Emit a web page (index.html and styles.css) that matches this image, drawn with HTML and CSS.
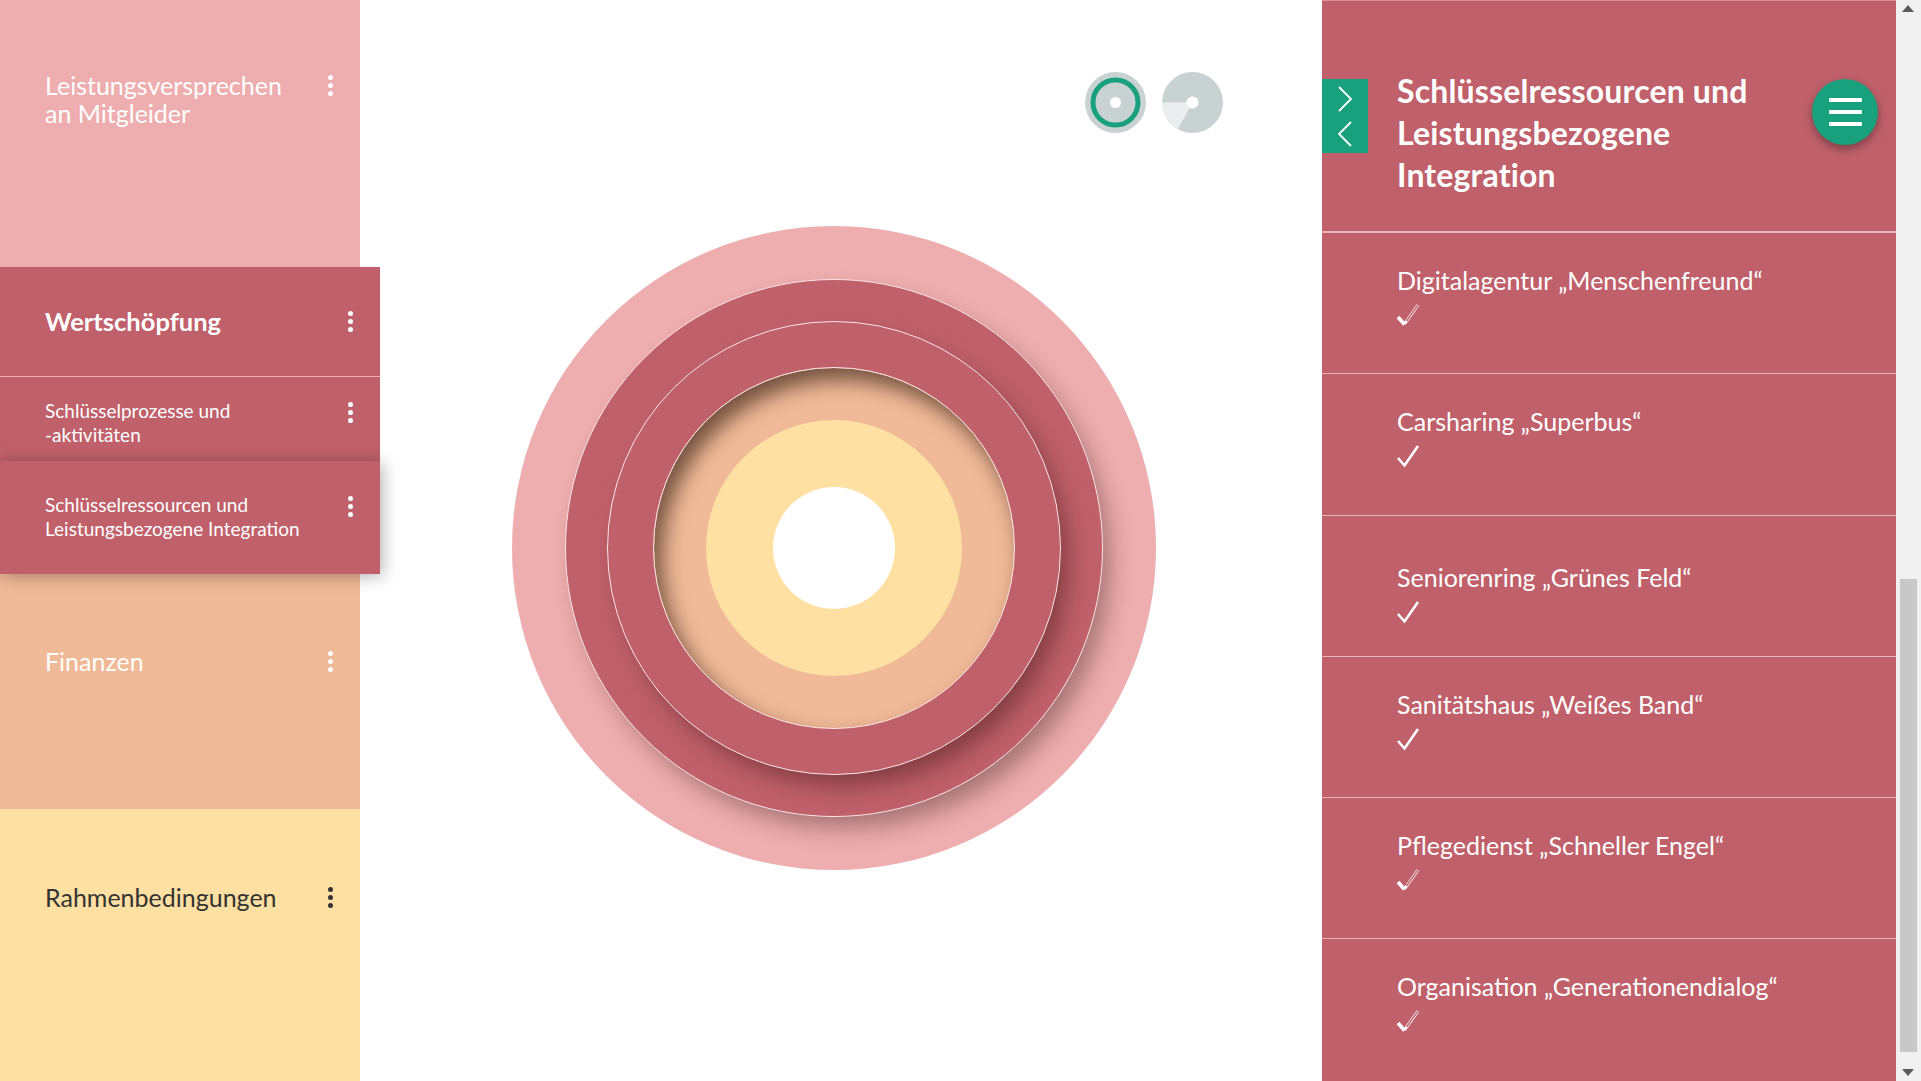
FILE: index.html
```html
<!DOCTYPE html>
<html lang="de">
<head>
    <meta charset="UTF-8">
    <meta name="viewport" content="width=device-width, initial-scale=1.0">
    <title>Schlüsselressourcen und Leistungsbezogene Integration</title>
    <link rel="stylesheet" href="styles.css">
</head>
<body>
    <!-- Linke Spalte -->
    <nav class="sidebar">
        <div class="block block-promise">
            <span>Leistungsversprechen<br>an Mitgleider</span>
            <span class="dots"><i></i><i></i><i></i></span>
        </div>
        <div class="group">
            <div class="group-head">
                <span>Wertschöpfung</span>
                <span class="dots"><i></i><i></i><i></i></span>
            </div>
            <div class="group-item">
                <span>Schlüsselprozesse und<br>-aktivitäten</span>
                <span class="dots"><i></i><i></i><i></i></span>
            </div>
            <div class="group-item group-item-active">
                <span>Schlüsselressourcen und<br>Leistungsbezogene Integration</span>
                <span class="dots"><i></i><i></i><i></i></span>
            </div>
        </div>
        <div class="block block-finance">
            <span>Finanzen</span>
            <span class="dots"><i></i><i></i><i></i></span>
        </div>
        <div class="block block-frame">
            <span>Rahmenbedingungen</span>
            <span class="dots"><i></i><i></i><i></i></span>
        </div>
    </nav>

    <!-- Diagramm -->
    <main class="main">
        <div class="view-switch">
            <svg class="view-icon" viewBox="0 0 61 61">
                <circle cx="30.5" cy="30.5" r="30.5" fill="#c9d2d2"/>
                <circle cx="30.5" cy="30.5" r="22.5" fill="none" stroke="#19a07d" stroke-width="5"/>
                <circle cx="30.5" cy="30.5" r="5.5" fill="#fff"/>
            </svg>
            <svg class="view-icon" viewBox="0 0 61 61">
                <circle cx="30.5" cy="30.5" r="30.5" fill="#c9d2d2"/>
                <path d="M30.5 30.5 L0 30.5 A30.5 30.5 0 0 0 15.8 57.2 Z" fill="#ebeeee"/>
                <circle cx="30.5" cy="30.5" r="6" fill="#fff"/>
            </svg>
        </div>
        <div class="disc disc-1">
            <div class="disc disc-2">
                <div class="disc disc-3">
                    <div class="disc disc-4">
                        <div class="disc disc-5">
                            <div class="disc disc-6"></div>
                        </div>
                    </div>
                </div>
            </div>
        </div>
    </main>

    <!-- Rechte Spalte -->
    <aside class="panel">
        <header class="panel-head">
            <div class="pager">
                <svg viewBox="0 0 14 26" class="chevron"><path d="M1 1 L13 13 L1 25"/></svg>
                <svg viewBox="0 0 14 26" class="chevron"><path d="M13 1 L1 13 L13 25"/></svg>
            </div>
            <h1>Schlüsselressourcen und<br>Leistungsbezogene<br>Integration</h1>
            <button class="menu-btn"><i></i><i></i><i></i></button>
        </header>
        <ul class="list">
            <li>
                <p>Digitalagentur „Menschenfreund“</p>
                <svg class="check" viewBox="0 0 24 25"><path class="check-short" d="M2 14 L8.5 21.5"/><path class="check-outer" d="M8.5 21 L22 2"/><path class="check-inner" d="M10.5 18 L22 2"/></svg>
            </li>
            <li>
                <p>Carsharing „Superbus“</p>
                <svg class="check" viewBox="0 0 24 25"><path class="check-full" d="M2 14 L8.5 21.5 L22 2"/></svg>
            </li>
            <li class="list-low">
                <p>Seniorenring „Grünes Feld“</p>
                <svg class="check" viewBox="0 0 24 25"><path class="check-full" d="M2 14 L8.5 21.5 L22 2"/></svg>
            </li>
            <li>
                <p>Sanitätshaus „Weißes Band“</p>
                <svg class="check" viewBox="0 0 24 25"><path class="check-full" d="M2 14 L8.5 21.5 L22 2"/></svg>
            </li>
            <li>
                <p>Pflegedienst „Schneller Engel“</p>
                <svg class="check" viewBox="0 0 24 25"><path class="check-short" d="M2 14 L8.5 21.5"/><path class="check-outer" d="M8.5 21 L22 2"/><path class="check-inner" d="M10.5 18 L22 2"/></svg>
            </li>
            <li>
                <p>Organisation „Generationendialog“</p>
                <svg class="check" viewBox="0 0 24 25"><path class="check-short" d="M2 14 L8.5 21.5"/><path class="check-outer" d="M8.5 21 L22 2"/><path class="check-inner" d="M10.5 18 L22 2"/></svg>
            </li>
        </ul>
    </aside>

    <!-- Scrollbar -->
    <div class="scrollbar">
        <span class="arrow arrow-up"></span>
        <div class="thumb"></div>
        <span class="arrow arrow-down"></span>
    </div>
</body>
</html>
```

FILE: styles.css
```css
html, body {
    margin: 0;
    padding: 0;
    height: 1081px;
    overflow: hidden;
}
body {
    display: flex;
    background: #fff;
    color: #fff;
    font-family: Lato, "Open Sans", sans-serif;
}

/* Linke Spalte */
.sidebar {
    width: 360px;
    flex: none;
    display: flex;
    flex-direction: column;
    position: relative;
    z-index: 2;
}
.block {
    display: flex;
    justify-content: space-between;
    align-items: flex-start;
    box-sizing: border-box;
    padding-left: 45px;
    padding-right: 27px;
    font-size: 25px;
    line-height: 28px;
}
.block-promise {
    height: 267px;
    padding-top: 71px;
    background: #eeadae;
}
.block-finance {
    height: 235px;
    padding-top: 73px;
    background: #f0b997;
}
.block-frame {
    height: 272px;
    padding-top: 74px;
    background: #fee0a2;
    color: #333;
}
.group {
    width: 380px;
    background: #c0606a;
}
.group-head, .group-item {
    display: flex;
    justify-content: space-between;
    align-items: flex-start;
    box-sizing: border-box;
    padding-left: 45px;
    padding-right: 27px;
}
.group-head {
    height: 110px;
    padding-top: 40px;
    border-bottom: 1px solid #eeadae;
    font-size: 25.5px;
    font-weight: 700;
    line-height: 28px;
}
.group-item {
    height: 84px;
    padding-top: 22px;
    font-size: 19px;
    line-height: 24px;
}
.group-item-active {
    height: 113px;
    padding-top: 32px;
    position: relative;
    background: #c0606a;
    box-shadow: 2px 2px 16px rgba(0, 0, 0, 0.32);
}
.dots {
    display: flex;
    flex-direction: column;
    gap: 3px;
    margin-top: 4px;
}
.group-item .dots {
    margin-top: 3px;
}
.dots i {
    display: block;
    width: 5px;
    height: 5px;
    border-radius: 50%;
    background: currentColor;
}

/* Diagramm */
.main {
    flex: 1;
    display: flex;
    flex-direction: column;
    align-items: center;
    padding-right: 14px;
}
.view-switch {
    align-self: flex-end;
    display: flex;
    gap: 16px;
    margin-top: 72px;
    margin-right: 85px;
    margin-bottom: 93px;
}
.view-icon {
    display: block;
    width: 61px;
    height: 61px;
}
.disc {
    display: flex;
    align-items: center;
    justify-content: center;
    flex: none;
    box-sizing: border-box;
    border-radius: 50%;
}
.disc-1 {
    width: 644px;
    height: 644px;
    background: #eeadae;
}
.disc-2 {
    width: 538px;
    height: 538px;
    background: #c0606a;
    border: 1px solid #f8e4e4;
    box-shadow: 10px 14px 24px -4px rgba(60, 30, 30, 0.42);
}
.disc-3 {
    width: 454px;
    height: 454px;
    background: #c0606a;
    border: 1px solid #f8e4e4;
    box-shadow: 10px 14px 24px -4px rgba(60, 20, 20, 0.48);
}
.disc-4 {
    width: 362px;
    height: 362px;
    background: #f0b997;
    border: 1px solid #f8e4e4;
    box-shadow: inset 8px 12px 20px rgba(40, 20, 10, 0.62);
}
.disc-5 {
    width: 256px;
    height: 256px;
    background: #fee0a2;
}
.disc-6 {
    width: 122px;
    height: 122px;
    background: #fff;
}

/* Rechte Spalte */
.panel {
    width: 574px;
    flex: none;
    height: 1081px;
    background: #c0606a;
    border-top: 1px solid #d98f95;
    box-sizing: border-box;
}
.panel-head {
    display: flex;
    align-items: flex-start;
    height: 232px;
    box-sizing: border-box;
    border-bottom: 2px solid #e6b3b6;
    position: relative;
}
.pager {
    width: 46px;
    height: 74px;
    margin-top: 78px;
    background: #19a07d;
    display: flex;
    flex-direction: column;
    align-items: center;
    justify-content: center;
    gap: 9px;
    flex: none;
}
.chevron {
    width: 14px;
    height: 26px;
    display: block;
}
.chevron path {
    fill: none;
    stroke: #fff;
    stroke-width: 1.8;
}
.panel-head h1 {
    margin: 69px 0 0 29px;
    font-size: 32px;
    font-weight: 700;
    line-height: 42px;
    letter-spacing: 0.15px;
}
.menu-btn {
    position: absolute;
    top: 78px;
    right: 18px;
    width: 66px;
    height: 66px;
    padding: 0;
    border: none;
    border-radius: 50%;
    background: #19a07d;
    box-shadow: 0 4px 10px rgba(0, 0, 0, 0.35);
    display: flex;
    flex-direction: column;
    align-items: center;
    justify-content: center;
    gap: 8px;
}
.menu-btn i {
    display: block;
    width: 33px;
    height: 4px;
    border-radius: 1px;
    background: #fff;
}
.list {
    margin: 0;
    padding: 0;
    list-style: none;
}
.list li {
    height: 141.3px;
    box-sizing: border-box;
    padding: 31px 0 0 74px;
    border-bottom: 1px solid #e6b3b6;
}
.list li:last-child {
    border-bottom: none;
}
.list .list-low {
    padding-top: 45px;
}
.list p {
    margin: 0 0 0 1px;
    font-size: 25px;
    line-height: 32px;
}
.check {
    display: block;
    width: 24px;
    height: 25px;
    margin-top: 7px;
}
.check path {
    fill: none;
    stroke: #fff;
}
.check-full {
    stroke-width: 2.6;
}
.check-short {
    stroke-width: 3.6;
}
.check-outer {
    stroke-width: 3;
}
.check .check-inner {
    stroke: #c0606a;
    stroke-width: 1.4;
}

/* Scrollbar */
.scrollbar {
    width: 25px;
    flex: none;
    height: 1081px;
    background: #f1f1f1;
    position: relative;
}
.thumb {
    position: absolute;
    top: 579px;
    left: 4px;
    width: 17px;
    height: 473px;
    background: #c8c8c8;
}
.arrow {
    position: absolute;
    left: 6px;
    width: 0;
    height: 0;
    border-left: 6px solid transparent;
    border-right: 6px solid transparent;
}
.arrow-up {
    top: 5px;
    border-bottom: 7px solid #5a5a5a;
}
.arrow-down {
    bottom: 5px;
    border-top: 7px solid #5a5a5a;
}
```
